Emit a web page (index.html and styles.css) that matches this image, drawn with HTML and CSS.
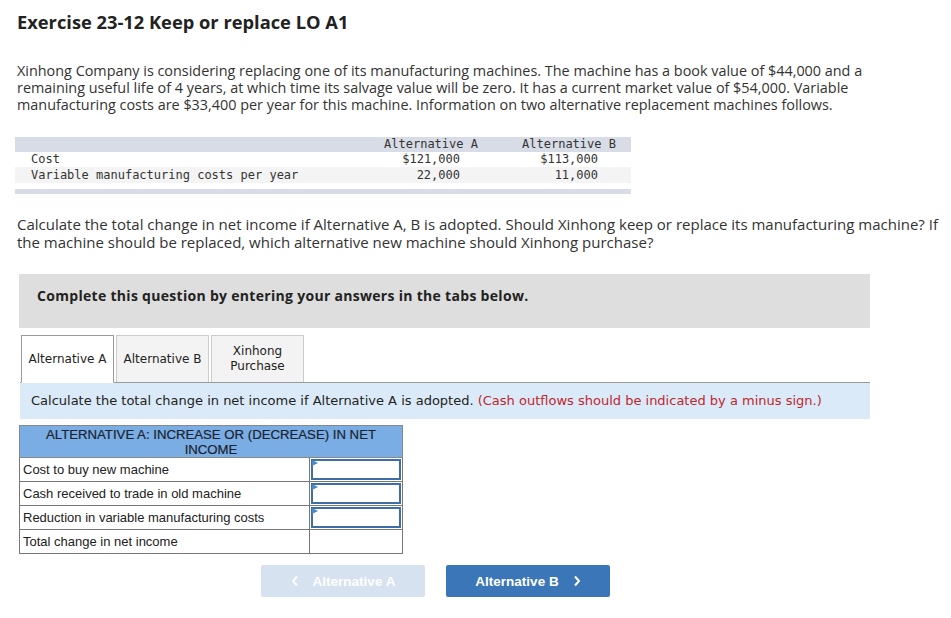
FILE: index.html
```html
<!DOCTYPE html>
<html>
<head>
<meta charset="utf-8">
<link rel="stylesheet" href="styles.css">
</head>
<body>
<h1 class="title">Exercise 23-12 Keep or replace LO A1</h1>
<p class="intro">Xinhong Company is considering replacing one of its manufacturing machines. The machine has a book value of $44,000 and a remaining useful life of 4 years, at which time its salvage value will be zero. It has a current market value of $54,000. Variable manufacturing costs are $33,400 per year for this machine. Information on two alternative replacement machines follows.</p>

<div class="mono-table">
  <div class="mrow head">
    <span class="mlabel"></span><span class="mcol">Alternative A</span><span></span><span class="mcol">Alternative B</span><span></span>
  </div>
  <div class="mrow">
    <span class="mlabel">Cost</span><span class="mnum">$121,000</span><span></span><span class="mnum">$113,000</span><span></span>
  </div>
  <div class="mrow shade">
    <span class="mlabel">Variable manufacturing costs per year</span><span class="mnum">22,000</span><span></span><span class="mnum">11,000</span><span></span>
  </div>
  <div class="mfoot"></div>
</div>

<p class="question">Calculate the total change in net income if Alternative A, B is adopted. Should Xinhong keep or replace its manufacturing machine? If the machine should be replaced, which alternative new machine should Xinhong purchase?</p>

<div class="notice">Complete this question by entering your answers in the tabs below.</div>

<div class="tabs">
  <div class="tab active">Alternative A</div>
  <div class="tab">Alternative B</div>
  <div class="tab">Xinhong<br>Purchase</div>
</div>
<div class="info">Calculate the total change in net income if Alternative A is adopted. <span class="warn">(Cash outflows should be indicated by a minus sign.)</span></div>

<table class="answer">
  <tr><th colspan="2">ALTERNATIVE A: INCREASE OR (DECREASE) IN NET INCOME</th></tr>
  <tr><td class="lbl">Cost to buy new machine</td><td class="inp"><div class="box"><span class="flag"></span></div></td></tr>
  <tr><td class="lbl">Cash received to trade in old machine</td><td class="inp"><div class="box"><span class="flag"></span></div></td></tr>
  <tr><td class="lbl">Reduction in variable manufacturing costs</td><td class="inp"><div class="box"><span class="flag"></span></div></td></tr>
  <tr><td class="lbl">Total change in net income</td><td class="out"></td></tr>
</table>

<div class="nav">
  <div class="btn prev"><svg width="8" height="12" viewBox="0 0 8 12"><path d="M6 1.5 L2 6 L6 10.5" fill="none" stroke="#fff" stroke-width="2"/></svg><span>Alternative A</span></div>
  <div class="btn next"><span>Alternative B</span><svg width="8" height="12" viewBox="0 0 8 12"><path d="M2 1.5 L6 6 L2 10.5" fill="none" stroke="#fff" stroke-width="2"/></svg></div>
</div>
</body>
</html>
```

FILE: styles.css
```css
* { box-sizing: border-box; }
body {
  margin: 0;
  width: 951px;
  background: #fff;
  color: #222;
  font-family: "Open Sans", "Liberation Sans", sans-serif;
}
.title {
  margin: 10px 0 0 17px;
  font-size: 18.3px;
  font-weight: 700;
  line-height: 24px;
  color: #222;
}
.intro {
  margin: 28px 20px 0 17px;
  font-size: 14.4px;
  line-height: 17px;
  color: #333;
}
.mono-table {
  margin: 24px 0 0 15px;
  width: 616px;
  font-family: "DejaVu Sans Mono", "Liberation Mono", monospace;
  font-size: 12px;
  color: #333;
}
.mrow {
  display: grid;
  grid-template-columns: 369px 94px 44px 94px 15px;
  height: 15px;
  line-height: 15px;
}
.mrow.head { background: #d7dce6; height: 15px; }
.mrow.shade { background: #f4f4f4; height: 16px; line-height: 16px; }
.mlabel { padding-left: 16px; white-space: nowrap; }
.mcol { text-align: center; white-space: nowrap; }
.mnum { text-align: right; padding-right: 18px; }
.mfoot { margin-top: 6px; height: 5px; background: #d7dce6; }
.question {
  margin: 21px 0 0 17px;
  width: 934px;
  font-size: 15px;
  line-height: 18px;
  color: #333;
}
.notice {
  margin: 23px 0 0 19px;
  width: 851px;
  height: 54px;
  background: #dedede;
  padding: 13px 18px;
  font-family: "Open Sans", "Liberation Sans", sans-serif;
  font-weight: 700;
  font-size: 14px;
  letter-spacing: 0.3px;
  line-height: 18px;
  color: #222;
}
.tabs {
  margin: 7px 0 0 20px;
  width: 850px;
  display: flex;
  gap: 2px;
  border-bottom: 1px solid #999;
  padding-left: 1px;
  height: 48px;
}
.tab {
  width: 93px;
  height: 47px;
  margin-bottom: -1px;
  border: 1px solid #ccc;
  border-bottom: none;
  background: #f3f3f3;
  display: flex;
  align-items: center;
  justify-content: center;
  text-align: center;
  font-family: "DejaVu Sans", Verdana, sans-serif;
  font-size: 12px;
  line-height: 15px;
  color: #222;
}
.tab.active {
  background: #fff;
  border-color: #999;
  height: 48px;
  border-bottom: 1px solid #fff;
}
.info {
  margin: 0 0 0 20px;
  width: 850px;
  height: 36px;
  background: #dbeaf8;
  padding: 0 11px;
  font-family: "DejaVu Sans", Verdana, sans-serif;
  font-size: 13px;
  line-height: 36px;
  color: #222;
  white-space: nowrap;
}
.warn { color: #c0262d; }
.answer {
  margin: 6px 0 0 19px;
  border-collapse: collapse;
  width: 384px;
  font-family: "Liberation Sans", Arial, sans-serif;
  font-size: 13px;
  color: #222;
}
.answer th {
  background: #7aade3;
  border: 1px solid #888;
  height: 32px;
  padding: 0 2px;
  font-size: 13.2px;
  line-height: 15px;
  font-weight: 400;
  color: #1a2230;
  text-align: center;
  -webkit-text-stroke: 0.2px #1a2230;
}
.answer td {
  border: 1px solid #777;
  height: 24px;
  padding: 0;
}
.answer td.lbl {
  width: 290px;
  padding-left: 3px;
}
.answer td.inp { padding: 1px; }
.box {
  position: relative;
  height: 21px;
  border: 2px solid #3d6ea8;
}
.flag {
  position: absolute;
  left: -1px;
  top: -1px;
  width: 0;
  height: 0;
  border-top: 3px solid transparent;
  border-bottom: 3px solid transparent;
  border-left: 6px solid #4a86cc;
}
.nav {
  margin: 11px 0 0 261px;
  display: flex;
  gap: 21px;
}
.btn {
  width: 164px;
  height: 32px;
  border-radius: 2px;
  display: flex;
  align-items: center;
  justify-content: center;
  gap: 14px;
  font-family: "Liberation Sans", Arial, sans-serif;
  font-weight: 700;
  font-size: 13.5px;
  color: #fff;
}
.btn.prev { background: #d6e2f0; }
.btn.next { background: #3a76b8; }
```
